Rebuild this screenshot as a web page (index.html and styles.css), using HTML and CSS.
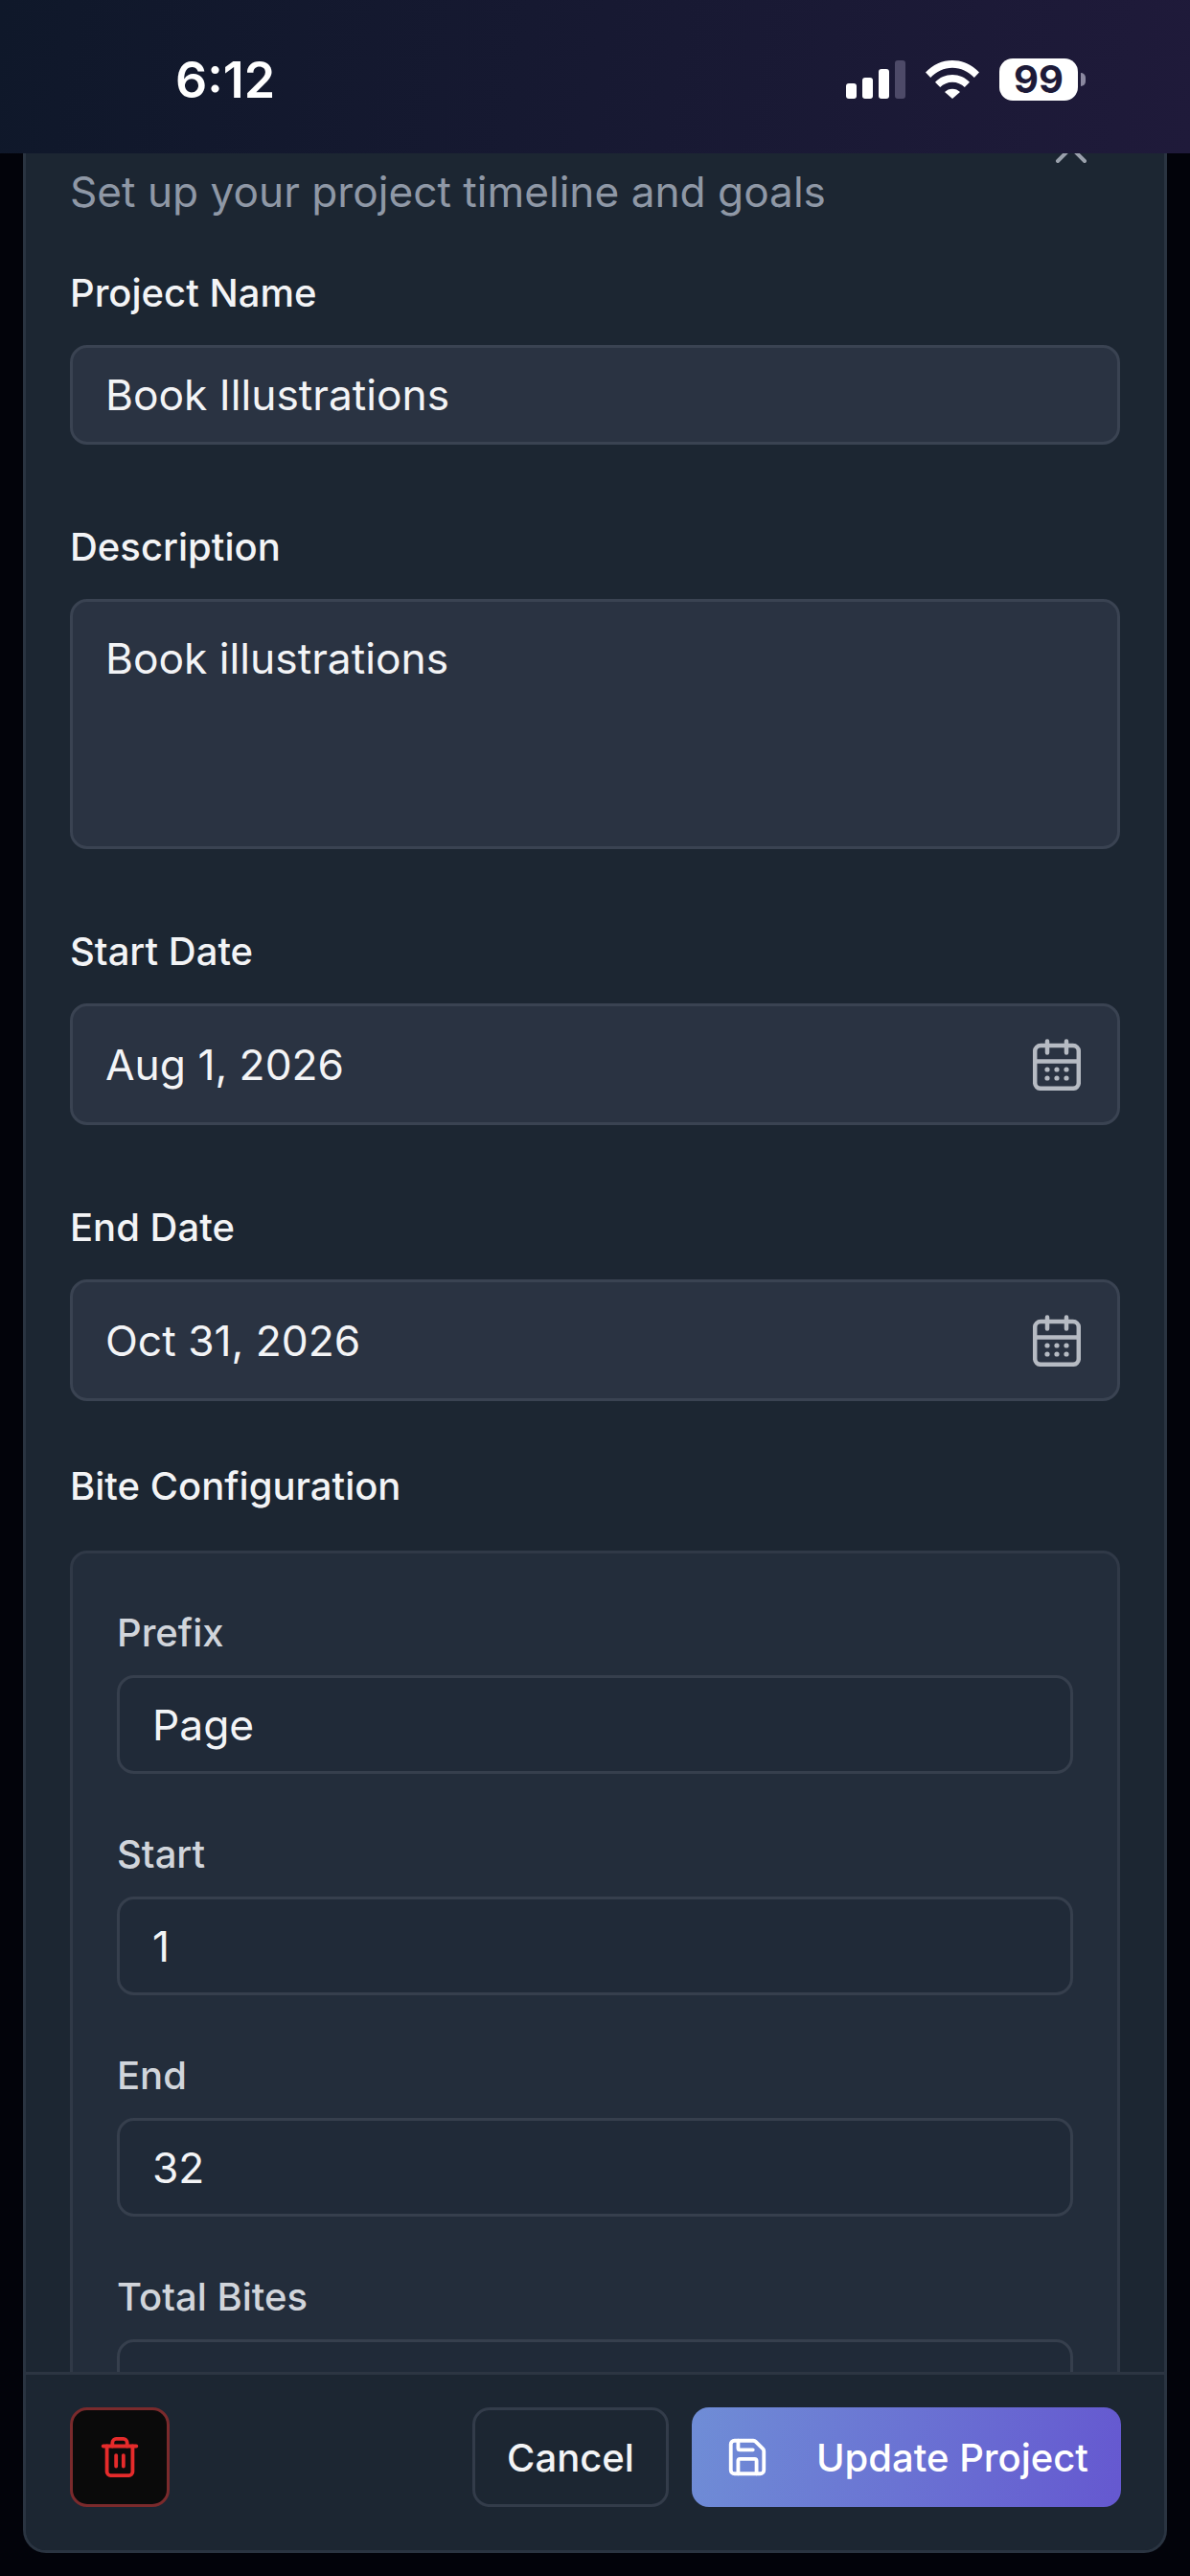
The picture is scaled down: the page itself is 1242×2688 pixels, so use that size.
FILE: index.html
```html
<!doctype html>
<html lang="en">

<head>
    <meta charset="UTF-8" />
    <meta name="viewport" content="width=device-width, initial-scale=1.0" />
    <title>Edit Project</title>
    <link rel="stylesheet" href="styles.css">
</head>

<body>
    <header class="status-bar">
        <span class="clock">6:12</span>
        <div class="status-icons">
            <div class="signal">
                <span class="bar bar-1"></span>
                <span class="bar bar-2"></span>
                <span class="bar bar-3"></span>
                <span class="bar bar-4"></span>
            </div>
            <svg class="wifi" viewBox="0 0 56 40" fill="#fff">
                <path d="M0 12.500C7.500 4.600 17.300 0 28 0s20.500 4.600 28 12.500l-5.200 5.400C44.700 11.600 36.700 7.700 28 7.700S11.300 11.600 5.200 17.900z" />
                <path d="M10 22.700C14.800 17.800 21 15 28 15s13.200 2.800 18 7.700l-5.200 5.400C37.400 24.700 32.900 22.700 28 22.700s-9.400 2-12.800 5.400z" />
                <path d="M20 33c2.100-2.100 4.900-3.300 8-3.300s5.900 1.200 8 3.300l-8 7z" />
            </svg>
            <div class="battery">99</div>
            <span class="battery-cap"></span>
        </div>
    </header>

    <main class="modal">
        <!-- close button, mostly scrolled away under the status bar -->
        <svg class="close-icon" viewBox="0 0 36 36" fill="none" stroke="#9aa1ac" stroke-width="4" stroke-linecap="round">
            <path d="M4 4l28 28M32 4L4 32" />
        </svg>

        <div class="modal-body">
            <p class="subtitle">Set up your project timeline and goals</p>

            <div class="field">
                <label class="field-label">Project Name</label>
                <div class="input">Book Illustrations</div>
            </div>

            <div class="field">
                <label class="field-label">Description</label>
                <div class="input textarea">Book illustrations</div>
            </div>

            <div class="field">
                <label class="field-label">Start Date</label>
                <div class="input date">
                    <span>Aug 1, 2026</span>
                    <svg class="calendar-icon" viewBox="0 0 50 54" fill="none" stroke="#b6bbc3" stroke-width="4.500" stroke-linecap="round">
                        <rect x="2.200" y="7" width="45.600" height="44.800" rx="6" />
                        <path d="M2.200 23.500h45.600M15 2.500v12M35 2.500v12" />
                        <g fill="#b6bbc3" stroke="none">
                            <circle cx="15" cy="32" r="2.600" />
                            <circle cx="25" cy="32" r="2.600" />
                            <circle cx="35" cy="32" r="2.600" />
                            <circle cx="15" cy="41" r="2.600" />
                            <circle cx="25" cy="41" r="2.600" />
                            <circle cx="35" cy="41" r="2.600" />
                        </g>
                    </svg>
                </div>
            </div>

            <div class="field">
                <label class="field-label">End Date</label>
                <div class="input date">
                    <span>Oct 31, 2026</span>
                    <svg class="calendar-icon" viewBox="0 0 50 54" fill="none" stroke="#b6bbc3" stroke-width="4.500" stroke-linecap="round">
                        <rect x="2.200" y="7" width="45.600" height="44.800" rx="6" />
                        <path d="M2.200 23.500h45.600M15 2.500v12M35 2.500v12" />
                        <g fill="#b6bbc3" stroke="none">
                            <circle cx="15" cy="32" r="2.600" />
                            <circle cx="25" cy="32" r="2.600" />
                            <circle cx="35" cy="32" r="2.600" />
                            <circle cx="15" cy="41" r="2.600" />
                            <circle cx="25" cy="41" r="2.600" />
                            <circle cx="35" cy="41" r="2.600" />
                        </g>
                    </svg>
                </div>
            </div>

            <div class="field bite-field">
                <label class="field-label bite-label">Bite Configuration</label>
                <div class="bite-panel">
                    <div class="bite-row">
                        <label class="bite-row-label">Prefix</label>
                        <div class="input inner">Page</div>
                    </div>
                    <div class="bite-row">
                        <label class="bite-row-label">Start</label>
                        <div class="input inner">1</div>
                    </div>
                    <div class="bite-row">
                        <label class="bite-row-label">End</label>
                        <div class="input inner">32</div>
                    </div>
                    <div class="bite-row">
                        <label class="bite-row-label">Total Bites</label>
                        <div class="input inner"></div>
                    </div>
                </div>
            </div>
        </div>

        <footer class="modal-footer">
            <button class="delete-btn">
                <svg class="btn-icon" viewBox="0 0 24 24" fill="none" stroke="#e52b2b" stroke-width="2" stroke-linecap="round" stroke-linejoin="round">
                    <path d="M3 6h18" />
                    <path d="M19 6v14c0 1-1 2-2 2H7c-1 0-2-1-2-2V6" />
                    <path d="M8 6V4c0-1 1-2 2-2h4c1 0 2 1 2 2v2" />
                    <path d="M10 11v6M14 11v6" />
                </svg>
            </button>
            <div class="footer-actions">
                <button class="cancel-btn">Cancel</button>
                <button class="update-btn">
                    <svg class="btn-icon" viewBox="0 0 24 24" fill="none" stroke="#fff" stroke-width="2" stroke-linecap="round" stroke-linejoin="round">
                        <path d="M15.200 3a2 2 0 0 1 1.400.6l3.800 3.800a2 2 0 0 1 .6 1.400V19a2 2 0 0 1-2 2H5a2 2 0 0 1-2-2V5a2 2 0 0 1 2-2z" />
                        <path d="M17 21v-7a1 1 0 0 0-1-1H8a1 1 0 0 0-1 1v7" />
                        <path d="M7 3v4a1 1 0 0 0 1 1h7" />
                    </svg>
                    Update Project
                </button>
            </div>
        </footer>
    </main>
</body>

</html>
```

FILE: styles.css
```css
* {
    box-sizing: border-box;
}

body {
    font-family: Inter, "Liberation Sans", sans-serif;
    margin: 0;
    width: 1242px;
    height: 2688px;
    display: flex;
    flex-direction: column;
    background: #02030a;
    overflow: hidden;
    color: #fff;
}

.status-bar {
    position: relative;
    z-index: 2;
    height: 160px;
    flex-shrink: 0;
    display: flex;
    justify-content: space-between;
    align-items: flex-start;
    padding: 52px 109px 0 183px;
    background: linear-gradient(100deg, #0f182a 0%, #1f1a3a 100%);
}

.clock {
    font-size: 52px;
    line-height: 64px;
    font-weight: 600;
}

.status-icons {
    display: flex;
    align-items: flex-start;
    padding-top: 9px;
}

.signal {
    display: flex;
    align-items: flex-end;
    gap: 6px;
    height: 40px;
    margin-top: 2px;
}

.bar {
    width: 11px;
    border-radius: 3px;
    background: #fff;
}

.bar-1 {
    height: 16px;
}

.bar-2 {
    height: 22px;
}

.bar-3 {
    height: 31px;
}

.bar-4 {
    height: 40px;
    background: #4d4a68;
}

.wifi {
    width: 56px;
    height: 40px;
    margin: 2px 21px 0;
}

.battery {
    width: 82px;
    height: 44px;
    border-radius: 14px;
    background: #fff;
    color: #1d1a38;
    font-size: 40px;
    line-height: 44px;
    font-weight: 700;
    text-align: center;
}

.battery-cap {
    width: 5px;
    height: 14px;
    margin: 15px 0 0 3px;
    border-radius: 0 5px 5px 0;
    background: #8b89a0;
}

.modal {
    position: relative;
    flex: 1;
    min-height: 0;
    margin: 0 24px 24px;
    display: flex;
    flex-direction: column;
    background: #1c2632;
    border: 3px solid #2a3441;
    border-top: none;
    border-radius: 0 0 24px 24px;
    overflow: hidden;
}

.close-icon {
    position: absolute;
    top: -24px;
    right: 79px;
    width: 36px;
    height: 36px;
}

.modal-body {
    flex: 1;
    min-height: 0;
    overflow: hidden;
    padding: 0 46px;
}

.subtitle {
    margin: 11px 0 0;
    font-size: 44.200px;
    line-height: 58px;
    color: #8f98a6;
}

.field {
    margin-top: 77px;
}

.subtitle + .field {
    margin-top: 47px;
}

.field-label {
    display: block;
    height: 60px;
    margin-bottom: 24px;
    font-size: 40px;
    line-height: 60px;
    font-weight: 500;
    color: #f3f4f6;
}

.input {
    height: 104px;
    padding: 0 34px;
    display: flex;
    align-items: center;
    background: #2a3342;
    border: 3px solid #3a4352;
    border-radius: 18px;
    font-size: 44.300px;
    color: #f3f4f6;
}

.textarea {
    height: 261px;
    align-items: flex-start;
    padding-top: 29px;
    line-height: 60px;
}

.date {
    height: 127px;
    justify-content: space-between;
    padding-right: 38px;
}

.calendar-icon {
    width: 50px;
    height: 54px;
}

.bite-field {
    margin-top: 59px;
}

.bite-label {
    margin-bottom: 37px;
}

.bite-panel {
    padding: 53px 46px 60px;
    background: #232d3b;
    border: 3px solid #303947;
    border-radius: 18px;
}

.bite-row {
    margin-bottom: 54px;
}

.bite-row-label {
    display: block;
    height: 60px;
    margin-bottom: 14px;
    font-size: 40px;
    line-height: 60px;
    font-weight: 500;
    color: #d1d5db;
}

.inner {
    height: 103px;
    background: #202a38;
    border-color: #363f4d;
}

.modal-footer {
    flex-shrink: 0;
    height: 186px;
    display: flex;
    justify-content: space-between;
    padding: 34px 45px 0 46px;
    background: #1c2632;
    border-top: 3px solid #2c3542;
}

button {
    height: 104px;
    font-family: inherit;
    font-size: 40px;
    font-weight: 500;
    border-radius: 18px;
    cursor: pointer;
}

.btn-icon {
    width: 46px;
    height: 46px;
}

.delete-btn {
    width: 104px;
    padding: 0;
    display: flex;
    align-items: center;
    justify-content: center;
    background: #0a0a0a;
    border: 3px solid #7a2a2c;
}

.footer-actions {
    display: flex;
    gap: 24px;
}

.cancel-btn {
    width: 205px;
    padding: 0;
    background: transparent;
    border: 3px solid #333c4a;
    color: #f3f4f6;
}

.update-btn {
    width: 448px;
    padding: 0 0 0 35px;
    display: flex;
    align-items: center;
    gap: 49px;
    background: linear-gradient(100deg, #6f8dd6 0%, #6558d0 100%);
    border: none;
    color: #fff;
}
```
